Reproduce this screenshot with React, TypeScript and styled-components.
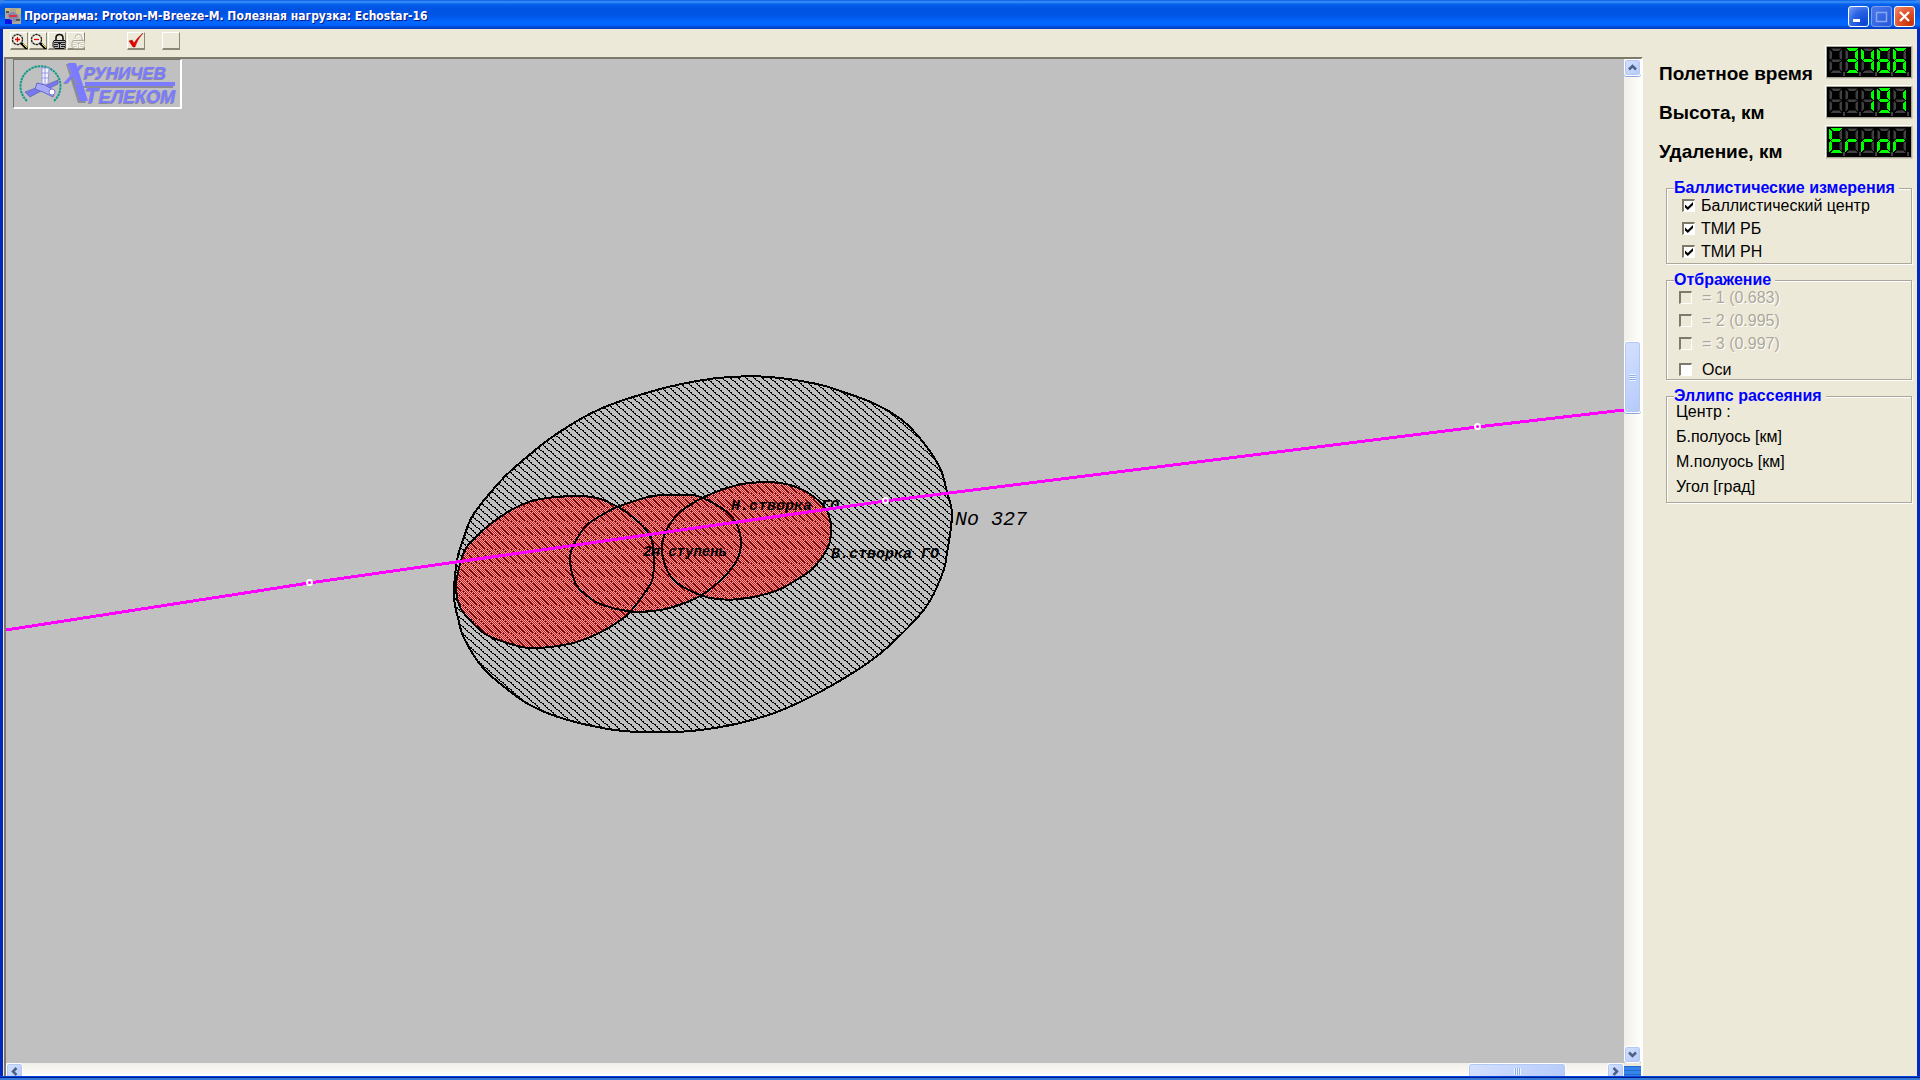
import React from "react";
import styled, { createGlobalStyle, css } from "styled-components";

const FACE = "#ece9d8";
const SHADE = "#aca899";
const sans = `"Liberation Sans", Arial, sans-serif`;

const Global = createGlobalStyle`
  *, *::before, *::after { box-sizing: border-box; }
  html, body { margin: 0; height: 100%; overflow: hidden; }
  body { font-family: ${sans}; color: #000; background: #3a81e0; }
  button { padding: 0; margin: 0; font: inherit; }
`;

const Window = styled.div`
  display: flex;
  flex-direction: column;
  height: 100vh;
  background: linear-gradient(#0042e0 0 1px, #001a90 1px 2px, #3478d8 2px 4px) bottom / 100% 4px no-repeat;
  padding-bottom: 4px;
`;

const TitleBar = styled.header`
  display: flex;
  align-items: center;
  flex: none;
  height: 29px;
  padding: 3px 5px 0 5px;
  gap: 3px;
  border-radius: 6px 6px 0 0;
  background: linear-gradient(#0a5fe0 0, #3a93ff 2px, #0862ea 4px, #0054e3 8px, #0055e5 15px, #0066ff 22px, #0066ff 25px, #0048d0 27px, #003cc0 29px);
`;

const Title = styled.h1`
  flex: 1;
  margin: 0;
  font: bold 12px/20px "DejaVu Sans Condensed", "DejaVu Sans", sans-serif;
  color: #fff;
  text-shadow: 1px 1px 0 #0a1883;
  white-space: nowrap;
`;

const Captions = styled.div`
  display: flex;
  gap: 2px;
`;

const CaptionButton = styled.button<{ $kind: "min" | "max" | "close" }>`
  width: 21px;
  height: 21px;
  border: 1px solid ${(p) => (p.$kind === "max" ? "#7f9fee" : "#fff")};
  border-radius: 3px;
  background: ${(p) =>
    p.$kind === "close"
      ? "radial-gradient(circle at 80% 85%, #c63505, #e0512a 50%, #ee9070)"
      : p.$kind === "max"
        ? "linear-gradient(135deg, #4b7ae8, #2357dc)"
        : "radial-gradient(circle at 85% 85%, #0b45d0, #2a63e4 55%, #7aa2f4)"};
  svg { display: block; }
`;

const Body = styled.div`
  display: flex;
  flex: 1;
  min-height: 0;
  background: ${FACE};
  border: solid;
  border-width: 0 3px;
  border-color: #0050e8 #0028c0;
`;

const Workspace = styled.main`
  display: flex;
  flex-direction: column;
  flex: 1;
  min-width: 0;
`;

const Toolbar = styled.div`
  display: flex;
  flex: none;
  gap: 1px;
  height: 28px;
  padding: 3px 7px;
`;

const ToolButton = styled.button<{ $gap?: number }>`
  width: 18px;
  height: 18px;
  margin-left: ${(p) => p.$gap ?? 0}px;
  background: ${FACE};
  border: solid;
  border-width: 1px 1px 2px 1px;
  border-color: #fff #8c8979 #8c8979 #fff;
  svg { display: block; }
`;

const Viewport = styled.section`
  display: grid;
  flex: 1;
  min-height: 0;
  margin: 0 1px;
  grid-template-columns: 1fr 17px;
  grid-template-rows: 1fr 13px;
  border: solid;
  border-width: 2px 2px 0 2px;
  border-color: #7d7a6c #fff #fff #7d7a6c;
`;

const MapArea = styled.div`
  position: relative;
  min-width: 0;
  min-height: 0;
  overflow: hidden;
  background: #c0c0c0;
`;

const MapSvg = styled.svg`
  position: absolute;
  inset: 0;
  width: 100%;
  height: 100%;
`;

const MapLabel = styled.text<{ $size: number; $bold?: boolean }>`
  font: italic ${(p) => (p.$bold ? "bold" : "normal")} ${(p) => p.$size}px "Liberation Mono", monospace;
`;

const LogoBox = styled.div`
  position: absolute;
  top: 0;
  left: 7px;
  border: solid;
  border-width: 1px 2px 2px 1px;
  border-color: #77756c #fff #fff #77756c;
  background: #c0c0c0;
  svg { display: block; }
`;

const LogoText = styled.text<{ $size: number }>`
  font: italic bold ${(p) => p.$size}px ${sans};
  text-shadow: -1px 1px 0 #8c8c98;
`;

const Track = styled.div<{ $vertical?: boolean }>`
  display: flex;
  flex-direction: ${(p) => (p.$vertical ? "column" : "row")};
  overflow: hidden;
  min-width: 0;
  min-height: 0;
  background: linear-gradient(${(p) => (p.$vertical ? "90deg" : "180deg")}, #f1efe8, #fefefb);
`;

const blueFace = css`
  border: 1px solid #fff;
  border-radius: 3px;
  box-shadow: inset 0 0 0 1px #b4c8f4, 0 1px 0 #8aa8e0;
  background: linear-gradient(135deg, #d4e0fe, #b5cafa);
`;

const ArrowButton = styled.button`
  flex: none;
  width: 17px;
  height: 17px;
  ${blueFace}
  svg { display: block; }
`;

const Space = styled.div<{ $grow: number }>`
  flex: ${(p) => p.$grow} 1 0;
`;

const Thumb = styled.div<{ $vertical?: boolean }>`
  flex: none;
  display: flex;
  align-items: center;
  justify-content: center;
  width: ${(p) => (p.$vertical ? 17 : 98)}px;
  height: ${(p) => (p.$vertical ? 72 : 17)}px;
  ${blueFace}
  &::before {
    content: "";
    width: 7px;
    height: 7px;
    background: repeating-linear-gradient(${(p) => (p.$vertical ? "180deg" : "90deg")}, #eef4fe 0 1px, #8cb0f8 1px 2px);
  }
`;

const Corner = styled.div`
  margin-top: 3px;
  background: repeating-linear-gradient(#2a66d0 0 1px, #3584ea 1px 4px);
`;

const Side = styled.aside`
  flex: none;
  width: 273px;
  padding: 16px 4px 0 15px;
`;

const Readouts = styled.div`
  display: flex;
  justify-content: space-between;
  margin-bottom: 20px;
`;

const Names = styled.div`
  display: flex;
  flex-direction: column;
  padding-top: 9px;
  height: 114px;
`;

const ReadoutName = styled.label`
  font: bold 19px/39px ${sans};
  white-space: nowrap;
`;

const Leds = styled.div`
  display: flex;
  flex-direction: column;
  gap: 6px;
`;

const Led = styled.output`
  display: flex;
  height: 34px;
  padding: 2px 2px 0 3px;
  background: #000;
  border: solid;
  border-width: 1px 2px 2px 1px;
  border-color: #fff #d6d2c2 #d6d2c2 #fff;
  outline: 1px solid ${SHADE};
  outline-offset: -2px;
`;

const Group = styled.fieldset`
  min-width: 0;
  margin: 0 1px 7px 7px;
  padding: 0 0 0 7px;
  border: 1px solid ${SHADE};
  box-shadow: 1px 1px 0 #fff, inset 1px 1px 0 #fff;
`;

const Legend = styled.legend`
  font: bold 16px/18px ${sans};
  color: #0000ff;
  background: ${FACE};
  padding: 0 4px 0 0;
  white-space: nowrap;
`;

const Rows = styled.div<{ $indent: number; $top: number; $end: number }>`
  display: flex;
  flex-direction: column;
  margin-top: ${(p) => p.$top}px;
  margin-bottom: ${(p) => p.$end}px;
  padding-left: ${(p) => p.$indent}px;
`;

const Check = styled.label<{ $gap: number; $off?: boolean; $space?: number }>`
  display: flex;
  align-items: center;
  gap: ${(p) => p.$gap}px;
  margin-top: ${(p) => p.$space ?? 0}px;
  font-size: 16px;
  line-height: 23px;
  color: ${(p) => (p.$off ? SHADE : "#000")};
  text-shadow: ${(p) => (p.$off ? "1px 1px 0 #fff" : "none")};
`;

const Box = styled.input`
  appearance: none;
  flex: none;
  width: 13px;
  height: 13px;
  margin: 0;
  background: #fff;
  border: solid;
  border-width: 2px 1px 1px 2px;
  border-color: #7d7a6c #fff #fff #7d7a6c;
  &:disabled { background: ${FACE}; }
  &:checked::after {
    content: "";
    display: block;
    width: 8px;
    height: 8px;
    margin: 1px;
    background: #000;
    clip-path: polygon(0 30%, 35% 62%, 100% 0, 100% 38%, 35% 100%, 0 68%);
  }
`;

const Line = styled.p`
  margin: 0;
  font-size: 16px;
  line-height: 25px;
  white-space: nowrap;
`;

const SEGMENTS: Record<string, string> = {
  a: "1,0 13,0 10,3 4,3",
  b: "13,1 13,11 12,12 10,10 10,4",
  c: "13,14 13,24 10,21 10,15 12,13",
  d: "1,25 13,25 10,22 4,22",
  e: "0,14 0,24 3,21 3,15 1,13",
  f: "0,1 0,11 1,12 3,10 3,4",
  g: "2,12 4,11 10,11 12,12 12,13 10,14 4,14 2,13",
};
const GLYPHS: Record<string, string> = {
  " ": "", "1": "bc", "3": "abcdg", "4": "bcfg", "6": "acdefg", "9": "abcdfg",
  E: "adefg", r: "eg", o: "cdeg",
};

function Display({ id, value }: { id: string; value: string }) {
  return (
    <Led id={id} aria-label={value.trim()}>
      {value.split("").map((ch, i) => (
        <svg key={i} width="16" height="28" shapeRendering="crispEdges" aria-hidden="true">
          {Object.keys(SEGMENTS).map((s) => (
            <polygon key={s} points={SEGMENTS[s]} fill="#404040" stroke="#000" strokeWidth=".5" />
          ))}
          {GLYPHS[ch].split("").map((s) => (
            <polygon key={s} points={SEGMENTS[s]} fill="#00ff00" />
          ))}
          <rect x="14" y="24" width="2" height="4" fill="#404040" />
        </svg>
      ))}
    </Led>
  );
}

function Arrow({ turn }: { turn: number }) {
  return (
    <svg width="15" height="15" aria-hidden="true">
      <path d="M4 9.500l3.500-3.500 3.500 3.500" fill="none" stroke="#4d6185" strokeWidth="2.500" transform={`rotate(${turn} 7.500 7.500)`} />
    </svg>
  );
}

function Lens({ plus }: { plus?: boolean }) {
  return (
    <svg width="17" height="16" aria-hidden="true">
      <path d="M10 10l6 6" stroke="#000" strokeWidth="2.500" />
      <path d="M12 11l4 4" stroke="#e0d020" strokeWidth="1" />
      <circle cx="6.500" cy="6.500" r="5" fill="#f4f1e6" stroke="#222" strokeWidth="1.300" strokeDasharray="2.500 .6" />
      <path d={plus ? "M4 6.500h5M6.500 4v5" : "M4 6.500h5"} stroke="#e00000" strokeWidth="1.300" />
    </svg>
  );
}

function Lock({ off }: { off?: boolean }) {
  const ink = off ? "#aca899" : "#111";
  return (
    <svg width="17" height="16" viewBox="-2 0 17 16" aria-hidden="true">
      {off && <path d="M5 9V5q0-3 4-3t4 3v1" fill="none" stroke="#fff" strokeWidth="2" />}
      <path d={off ? "M5 6V4.500q0-3 3.500-3t3.500 3V8" : "M5 8V5q0-3.500 3.500-3.500T12 5v3"} fill="none" stroke={ink} strokeWidth={off ? 1 : 1.6} />
      <path d="M3 7.500h11l1 2v4l-2 2H4l-2-2v-4z" fill={off ? "#f5f3e8" : "#b4b4b4"} stroke={ink} />
      <path d="M3 9.500h11M3 11.500h4M10 11.500h4M3 13.500h4M10 13.500h4M8.500 10v5M7 10.500h3" stroke={ink} strokeWidth={off ? 0.5 : 0.9} />
    </svg>
  );
}

type Point = [number, number];

const toPoints = (s: string): Point[] => s.split(" ").map((p) => p.split(",").map(Number) as Point);

/* Closed Catmull-Rom curve through the contour points. */
function contour(s: string) {
  const p = toPoints(s);
  const n = p.length;
  const at = (i: number) => p[(i + n) % n];
  let d = `M${p[0]}`;
  for (let i = 0; i < n; i++) {
    const [a, b, c, e] = [at(i - 1), at(i), at(i + 1), at(i + 2)];
    d += `C${b[0] + (c[0] - a[0]) / 6},${b[1] + (c[1] - a[1]) / 6} ${c[0] - (e[0] - b[0]) / 6},${c[1] - (e[1] - b[1]) / 6} ${c}`;
  }
  return d + "Z";
}

const zonePath = contour(
  "724,318 764,318 811,325 837,333 867,344 896,361 917,383 934,409 941,433 946,456 941,494 937,513 920,548 884,586 856,608 814,633 771,653 734,664 702,670 671,673 631,673 596,669 552,658 524,646 506,634 477,609 458,579 452,559 448,538 451,501 457,481 467,456 491,426 509,408 549,376 594,350 647,332 691,322",
);
const fallPaths = [
  "459,491 475,473 494,458 515,446 534,440 567,437 591,439 612,448 628,459 643,475 647,489 647,518 640,532 624,553 612,563 591,575 567,584 534,589 516,588 481,576 462,559 454,548 450,532 451,518",
  "564,498 569,483 581,466 601,453 614,447 647,437 681,436 697,439 721,453 731,466 735,484 731,501 717,519 694,537 667,548 647,552 621,552 594,545 580,536 571,527 566,514",
  "656,491 659,474 671,456 684,446 696,439 721,429 744,424 774,424 797,431 814,443 822,454 825,471 822,488 807,509 787,523 767,533 734,540 711,540 694,536 671,524 661,511",
].map(contour);

function TrajectoryMap() {
  return (
    <MapSvg role="img" aria-label="Трасса полета и районы падения">
      <defs>
        <pattern id="hatch" width="8" height="7" patternUnits="userSpaceOnUse">
          <path
            d={Array.from({ length: 7 }, (_, y) => `M${y} ${y}h${y % 2 ? 1 : 2}v1h-${y % 2 ? 1 : 2}z`).join("") + "M7 6h1v1h-1z"}
            shapeRendering="crispEdges"
          />
        </pattern>
        <pattern id="dither" width="2" height="2" patternUnits="userSpaceOnUse">
          <path d="M0 0h1v1h-1zM1 1h1v1h-1z" fill="#f00" shapeRendering="crispEdges" />
        </pattern>
      </defs>
      <g shapeRendering="crispEdges" stroke="#000" strokeWidth="2">
        <path d={zonePath} fill="url(#hatch)" />
        {fallPaths.map((d) => (
          <path key={d} d={d} fill="url(#dither)" stroke="none" />
        ))}
        {fallPaths.map((d) => (
          <path key={d} d={d} fill="none" />
        ))}
      </g>
      <MapLabel x="725" y="451" $size={15} $bold>Н.створка ГО</MapLabel>
      <MapLabel x="637" y="497" $size={14} $bold>2я ступень</MapLabel>
      <MapLabel x="825" y="499" $size={15} $bold>В.створка ГО</MapLabel>
      <MapLabel x="949" y="466" $size={20}>No 327</MapLabel>
      <polyline points="0,571 303,524 879,442 1471,368 1800,330" fill="none" stroke="#f0f" strokeWidth="3" shapeRendering="crispEdges" />
      {[[303, 523], [879, 441], [1471, 367]].map(([x, y]) => (
        <circle key={x} cx={x + 0.5} cy={y + 0.5} r="2.500" fill="#f0f" stroke="#fff" strokeWidth="2" />
      ))}
    </MapSvg>
  );
}

function Logo() {
  return (
    <LogoBox>
      <svg width="166" height="47" aria-label="Хруничев Телеком">
        <path d="M13 41A20 20 0 1 1 40 41" fill="none" stroke="#159a8a" strokeWidth="2" strokeDasharray="2.500 .7" />
        <path d="M11 32l16-6 4 3-15 8zM30 26l14-6v4l-12 6z" fill="#7777ee" stroke="#5858b0" strokeWidth=".6" />
        <path d="M28 8h7l-1 16h-6z" fill="#f4f4ff" stroke="#8888e0" strokeWidth=".8" />
        <path d="M28 13h6M28 18h6M31 8v15" stroke="#9a9ae8" />
        <path d="M23 23l8 2 10 6-2 6-10-5-8-3z" fill="#a8a8f8" stroke="#6868c8" />
        <circle cx="38" cy="32" r="3" fill="#fff" stroke="#7777dd" />
        <path d="M52 4h8l12 39h-8z" fill="#8c8c98" />
        <path d="M69 26h90v2H69z" fill="#8c8c98" />
        <g fill="#7b7bff">
          <path d="M54 3h8l12 38h-8z" />
          <rect x="71" y="22" width="90" height="4" />
          <LogoText x="51" y="23" $size={26}>Х</LogoText>
          <LogoText x="70" y="19" $size={17}>РУНИЧЕВ</LogoText>
          <LogoText x="71" y="43" $size={22}>Т</LogoText>
          <LogoText x="85" y="43" $size={18}>ЕЛЕКОМ</LogoText>
        </g>
      </svg>
    </LogoBox>
  );
}

export default function App() {
  return (
    <Window>
      <Global />
      <TitleBar>
        <svg width="16" height="16" aria-hidden="true">
          <rect width="16" height="16" fill="#aaa69a" />
          <path d="M0 11h7v5H0z" fill="#1010e0" />
          <path d="M0 0h5v4H0zM11 1h5v5h-5z" fill="#c8b878" />
          <path d="M3 6q5-4 9 0l2 4-4 4-6-3z" fill="#8888a8" />
          <path d="M4 7h8v2H4z" fill="#e03040" />
          <path d="M1 3h3v2H1zM11 11h4v2h-4z" fill="#555" />
        </svg>
        <Title>Программа: Proton-M-Breeze-M. Полезная нагрузка: Echostar-16</Title>
        <Captions>
          <CaptionButton $kind="min" aria-label="Свернуть">
            <svg width="19" height="19"><path d="M4 12h7v3H4z" fill="#fff" /></svg>
          </CaptionButton>
          <CaptionButton $kind="max" aria-label="Развернуть" disabled>
            <svg width="19" height="19"><path d="M4.500 5.500h10v9h-10zM4 5.500h11" fill="none" stroke="#8ba6f0" strokeWidth="1.500" /></svg>
          </CaptionButton>
          <CaptionButton $kind="close" aria-label="Закрыть">
            <svg width="19" height="19"><path d="M5 5l9 9M14 5l-9 9" stroke="#fff" strokeWidth="2.300" /></svg>
          </CaptionButton>
        </Captions>
      </TitleBar>
      <Body>
        <Workspace>
          <Toolbar>
            <ToolButton aria-label="Увеличить"><Lens plus /></ToolButton>
            <ToolButton aria-label="Уменьшить"><Lens /></ToolButton>
            <ToolButton aria-label="Закрепить"><Lock /></ToolButton>
            <ToolButton aria-label="Освободить" disabled><Lock off /></ToolButton>
            <ToolButton aria-label="Применить" $gap={41}>
              <svg width="16" height="15" aria-hidden="true"><path d="M1 8l3-1 2 3q4-6 9-10-6 7-8 14H5z" fill="#e80000" stroke="#a00000" strokeWidth=".5" /></svg>
            </ToolButton>
            <ToolButton aria-label="Цвет" $gap={16} />
          </Toolbar>
          <Viewport>
            <MapArea>
              <TrajectoryMap />
              <Logo />
            </MapArea>
            <Track $vertical>
              <ArrowButton aria-label="Вверх"><Arrow turn={0} /></ArrowButton>
              <Space $grow={265} />
              <Thumb $vertical />
              <Space $grow={633} />
              <ArrowButton aria-label="Вниз"><Arrow turn={180} /></ArrowButton>
            </Track>
            <Track>
              <ArrowButton aria-label="Влево"><Arrow turn={-90} /></ArrowButton>
              <Space $grow={1445} />
              <Thumb />
              <Space $grow={41} />
              <ArrowButton aria-label="Вправо"><Arrow turn={90} /></ArrowButton>
            </Track>
            <Corner />
          </Viewport>
        </Workspace>
        <Side>
          <Readouts>
            <Names>
              <ReadoutName htmlFor="time">Полетное время</ReadoutName>
              <ReadoutName htmlFor="height">Высота, км</ReadoutName>
              <ReadoutName htmlFor="range">Удаление, км</ReadoutName>
            </Names>
            <Leds>
              <Display id="time" value=" 3466" />
              <Display id="height" value="  191" />
              <Display id="range" value="Error" />
            </Leds>
          </Readouts>
          <Group>
            <Legend>Баллистические измерения</Legend>
            <Rows $indent={8} $top={-3} $end={0}>
              <Check $gap={6}><Box type="checkbox" defaultChecked />Баллистический центр</Check>
              <Check $gap={6}><Box type="checkbox" defaultChecked />ТМИ РБ</Check>
              <Check $gap={6}><Box type="checkbox" defaultChecked />ТМИ РН</Check>
            </Rows>
          </Group>
          <Group>
            <Legend>Отбражение</Legend>
            <Rows $indent={5} $top={-3} $end={-2}>
              <Check $gap={10} $off><Box type="checkbox" disabled />= 1 (0.683)</Check>
              <Check $gap={10} $off><Box type="checkbox" disabled />= 2 (0.995)</Check>
              <Check $gap={10} $off><Box type="checkbox" disabled />= 3 (0.997)</Check>
              <Check $gap={10} $space={3}><Box type="checkbox" />Оси</Check>
            </Rows>
          </Group>
          <Group>
            <Legend>Эллипс рассеяния</Legend>
            <Rows $indent={2} $top={-6} $end={3}>
              <Line>Центр :</Line>
              <Line>Б.полуось [км]</Line>
              <Line>М.полуось [км]</Line>
              <Line>Угол [град]</Line>
            </Rows>
          </Group>
        </Side>
      </Body>
    </Window>
  );
}
